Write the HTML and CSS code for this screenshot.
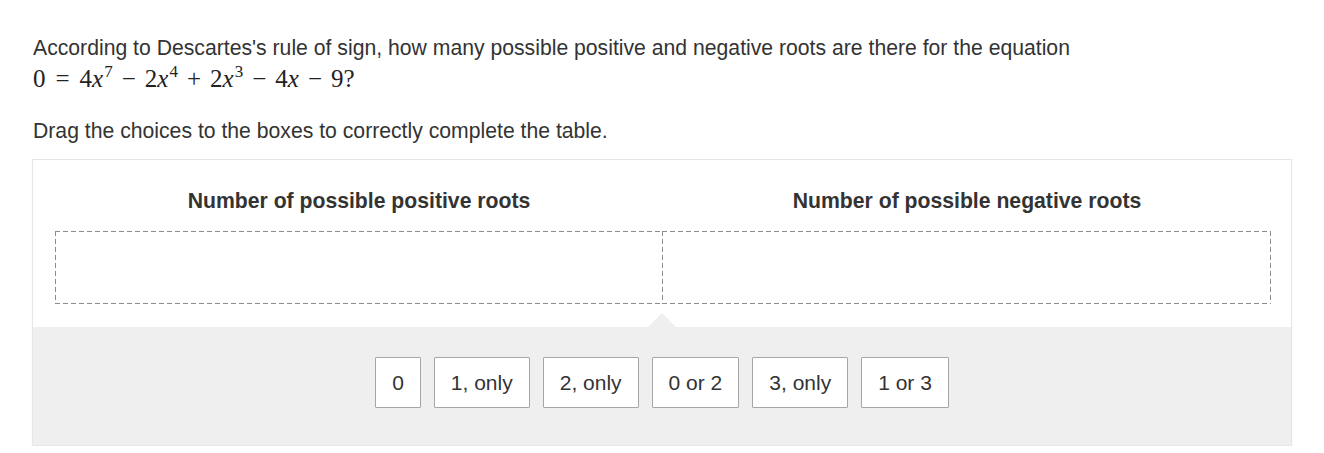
FILE: index.html
```html
<!DOCTYPE html>
<html lang="en">
<head>
<meta charset="utf-8">
<title>Descartes's rule of sign</title>
<link rel="stylesheet" href="styles.css">
</head>
<body>
<p class="question">According to Descartes's rule of sign, how many possible positive and negative roots are there for the equation <span class="math"><span class="mn">0</span><span class="rel">=</span><span class="mn">4</span><i class="mi">x</i><sup class="sup">7</sup><span class="bin">−</span><span class="mn">2</span><i class="mi">x</i><sup class="sup">4</sup><span class="bin">+</span><span class="mn">2</span><i class="mi">x</i><sup class="sup">3</sup><span class="bin">−</span><span class="mn">4</span><i class="mi">x</i><span class="bin">−</span><span class="mn">9?</span></span></p>
<p class="instruction">Drag the choices to the boxes to correctly complete the table.</p>
<div class="card">
  <div class="table">
    <div class="head">Number of possible positive roots</div>
    <div class="head">Number of possible negative roots</div>
    <div class="zone zone-left"></div>
    <div class="zone zone-right"></div>
  </div>
  <div class="tray">
    <span class="caret"></span>
    <div class="chip">0</div>
    <div class="chip">1, only</div>
    <div class="chip">2, only</div>
    <div class="chip">0 or 2</div>
    <div class="chip">3, only</div>
    <div class="chip">1 or 3</div>
  </div>
</div>
</body>
</html>
```
FILE: styles.css
```css
html, body {
  margin: 0;
  background: #ffffff;
}
body {
  padding: 32px 32px 0 32px;
  font-family: "Liberation Sans", Arial, sans-serif;
  font-size: 21.2px;
  color: #333333;
}
.question {
  margin: 0 0 19px 1px;
  line-height: 32px;
}
.math {
  font-family: "Liberation Serif", "Times New Roman", serif;
  font-size: 25px;
  line-height: 1;
  white-space: nowrap;
  color: #222;
}
.mi {
  font-style: italic;
}
.sup {
  font-size: 17px;
  line-height: 0;
  vertical-align: 0;
  position: relative;
  top: -10px;
  margin-left: 1px;
}
.rel {
  margin: 0 10px;
}
.bin {
  margin: 0 9px;
}
.instruction {
  margin: 0 0 12px 1px;
  line-height: 32px;
}
.card {
  border: 1px solid #e6e6e6;
  box-shadow: 0 1px 2px rgba(0, 0, 0, 0.04);
}
.table {
  display: grid;
  grid-template-columns: 1fr 1fr;
  padding: 25px 20px 23px 22px;
}
.head {
  text-align: center;
  font-weight: bold;
  line-height: 32px;
  margin-bottom: 14px;
}
.zone {
  height: 73px;
  box-sizing: border-box;
  background:
    repeating-linear-gradient(90deg, #8c8c8c 0 5px, transparent 5px 8px) left top / 100% 1px no-repeat,
    repeating-linear-gradient(90deg, #8c8c8c 0 5px, transparent 5px 8px) left bottom / 100% 1px no-repeat,
    repeating-linear-gradient(180deg, #8c8c8c 0 5px, transparent 5px 8px) left top / 1px 100% no-repeat,
    repeating-linear-gradient(180deg, #8c8c8c 0 5px, transparent 5px 8px) right top / 1px 100% no-repeat;
}
.zone-right {
  margin-left: -1px;
}
.tray {
  position: relative;
  background: #efefef;
  display: flex;
  justify-content: center;
  gap: 13px;
  padding: 30px 0 37px 0;
}
.caret {
  position: absolute;
  left: 50%;
  top: -14px;
  margin-left: -14px;
  width: 0;
  height: 0;
  border-left: 14px solid transparent;
  border-right: 14px solid transparent;
  border-bottom: 14px solid #efefef;
}
.chip {
  background: #ffffff;
  border: 1px solid #a6a6a6;
  border-radius: 1px;
  padding: 0 16px;
  height: 49px;
  line-height: 49px;
  font-size: 21px;
  color: #333333;
}
```
